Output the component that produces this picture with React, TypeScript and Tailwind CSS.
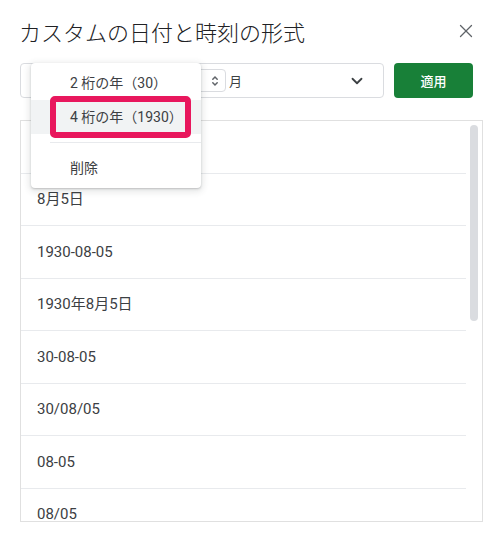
import React from "react";
import { ChevronDown, X } from "lucide-react";

const font = { fontFamily: '"Noto Sans CJK JP", sans-serif' };
const mixed = { fontFamily: 'Roboto, "Noto Sans CJK JP", sans-serif' };

const rows = ["", "8月5日", "1930-08-05", "1930年8月5日", "30-08-05", "30/08/05", "08-05", "08/05"];

export default function App() {
  return (
    <div className="relative w-[503px] h-[539px] bg-white overflow-hidden" style={mixed}>
      <div className="pt-[17px] pl-[19px] pr-[20px] flex items-center justify-between">
        <div className="text-[22px] leading-[28px] text-[#202124] font-light" style={font}>
          カスタムの日付と時刻の形式
        </div>
        <X size={22} strokeWidth={1.4} className="text-[#5f6368] mr-[6px]" />
      </div>

      <div className="mt-[18px] ml-[20px] flex gap-[10px]">
        <div className="w-[364px] h-[35px] border border-[#dadce0] rounded-[4px] flex items-center pl-[19px] pr-[17px]">
          <div className="w-[186px] h-[23px] border border-[#dadce0] rounded-[4px] flex items-center justify-end pr-[6px]">
            <svg width="8" height="12" viewBox="0 0 8 12" fill="none" stroke="#5f6368" strokeWidth="1.5" strokeLinecap="round">
              <path d="M1.8 4.2 L4 2 L6.2 4.2" />
              <path d="M1.8 7.8 L4 10 L6.2 7.8" />
            </svg>
          </div>
          <span className="ml-[3px] text-[13px] text-[#3c4043]" style={font}>月</span>
          <div className="flex-1" />
          <ChevronDown size={18} strokeWidth={2.4} className="text-[#3c4043]" />
        </div>
        <div className="w-[79px] h-[35px] rounded-[4px] bg-[#188038] flex items-center justify-center text-white text-[13px] font-medium" style={font}>
          適用
        </div>
      </div>

      <div className="relative mt-[22px] ml-[20px] w-[463px] h-[402px] border border-[#e0e0e0] overflow-hidden">
        <div className="mr-[16px]">
          {rows.map((r, i) => (
            <div key={i} className="h-[52.5px] border-b border-[#e8eaed] flex items-center pl-[16px] text-[15px] text-[#3c4043]">
              {r}
            </div>
          ))}
        </div>
        <div className="absolute left-[449px] top-[4px] w-[8px] h-[196px] rounded-full bg-[#dadce0]" />
      </div>

      <div className="absolute left-[31px] top-[63px] w-[170px] h-[125px] bg-white rounded-[4px] shadow-[0_1px_2px_rgba(60,64,67,0.25),0_2px_6px_2px_rgba(60,64,67,0.12)] pt-[3px] text-[14px] text-[#3c4043]">
        <div className="h-[34px] flex items-center pl-[39px]">2 桁の年（30）</div>
        <div className="h-[34px] flex items-center pl-[39px] bg-[#f1f3f4]">4 桁の年（1930）</div>
        <div className="my-[8px] ml-[19px] h-px bg-[#e8eaed]" />
        <div className="h-[32px] flex items-center pl-[39px]" style={font}>削除</div>
        <div className="absolute left-[19px] top-[33px] w-[141px] h-[42px] border-[6px] border-[#e8175d] rounded-[5px]" />
      </div>
    </div>
  );
}
